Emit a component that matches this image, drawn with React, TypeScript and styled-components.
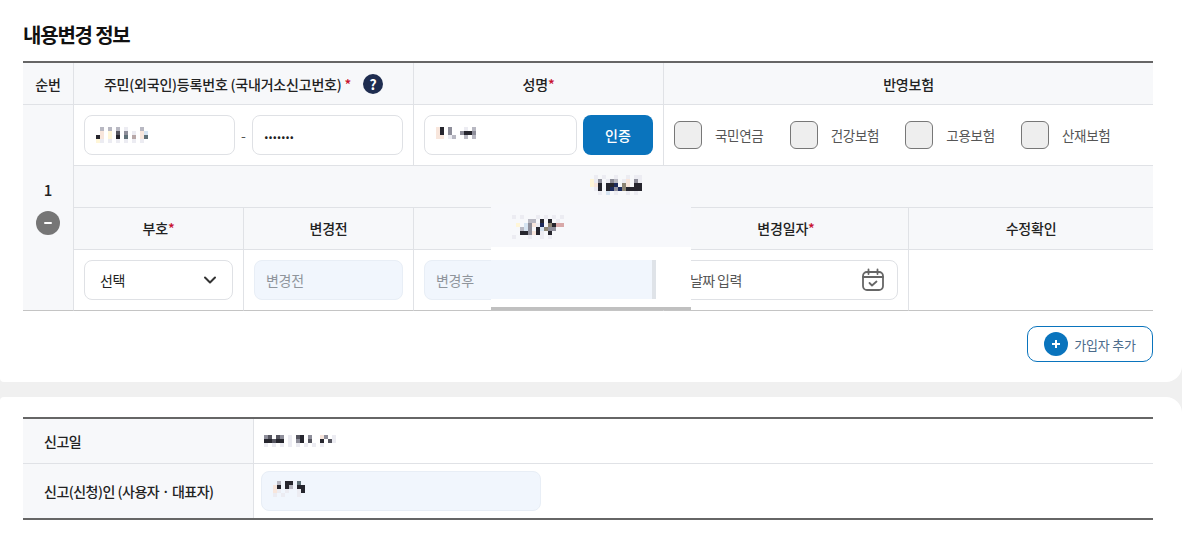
import React from 'react'
import styled, { createGlobalStyle } from 'styled-components'
import { ChevronDown } from 'lucide-react'

const palette: Record<string, string> = {
  k: '#26262e',
  d: '#55555f',
  n: '#1c2a5c',
  g: '#8e8e9a',
  s: '#b8b8c2',
  l: '#ececf2',
  y: '#fff6d8',
  p: '#f8e6dc',
  b: '#d6e4f2',
  t: '#8c8474',
  r: '#d8a8a8',
  m: '#b8a8a8',
  v: '#5f7078',
}

const Mosaic = ({ rows, className }: { rows: string[]; className?: string }) => (
  <svg
    className={className}
    width={rows[0].length * 4}
    height={rows.length * 4}
    shapeRendering='crispEdges'
  >
    {rows.map((row, y) =>
      row.split('').map((c, x) =>
        palette[c] ? <rect key={`${x}-${y}`} x={x * 4} y={y * 4} width='4' height='4' fill={palette[c]} /> : null
      )
    )}
  </svg>
)

const insurances = ['국민연금', '건강보험', '고용보험', '산재보험']

const App = () => {
  return (
    <>
      <GlobalStyle />
      <Page>
        <TopPanel>
          <Title>내용변경 정보</Title>
          <TableWrap>
            <MainTable>
              <colgroup>
                <col width='51' />
                <col width='170' />
                <col width='170' />
                <col width='250' />
                <col width='245' />
                <col width='244' />
              </colgroup>
              <tbody>
                <tr>
                  <HeadCell>순번</HeadCell>
                  <HeadCell colSpan={2}>
                    <HeadInner>
                      <span>
                        주민(외국인)등록번호 (국내거소신고번호) <Req>*</Req>
                      </span>
                      <HelpBadge>?</HelpBadge>
                    </HeadInner>
                  </HeadCell>
                  <HeadCell>
                    성명<Req>*</Req>
                  </HeadCell>
                  <HeadCell colSpan={2} $last>
                    반영보험
                  </HeadCell>
                </tr>
                <tr>
                  <NumCell rowSpan={4}>
                    <NumInner>
                      <NumText>1</NumText>
                      <MinusButton />
                    </NumInner>
                  </NumCell>
                  <BodyCell colSpan={2}>
                    <RrnRow>
                      <Field>
                        <Mosaic
                          rows={['.s.s.s.l...s..', '.p.y.d.g.l.pb.', 'kp.y.k.v.m.pv.', 'yl.l.l.l.l.l..']}
                        />
                      </Field>
                      <Dash>-</Dash>
                      <Field>
                        <Dots>.......</Dots>
                      </Field>
                    </RrnRow>
                  </BodyCell>
                  <BodyCell>
                    <NameRow>
                      <Field $grow>
                        <RaisedMosaic rows={['pk.g...l.s', 'pk.g..gkkg', 'pp.ls..s.s']} />
                      </Field>
                      <AuthButton type='button'>인증</AuthButton>
                    </NameRow>
                  </BodyCell>
                  <BodyCell colSpan={2} $last>
                    <CheckRow>
                      {insurances.map(name => (
                        <CheckItem key={name}>
                          <CheckBox />
                          <CheckLabel>{name}</CheckLabel>
                        </CheckItem>
                      ))}
                    </CheckRow>
                  </BodyCell>
                </tr>
                <tr>
                  <HeadCell colSpan={5} $last>
                    <CenterMosaic
                      rows={['..l.l..l..l.ll', '.ylg.lgs.lp.gl', '.ypk.kkn.tp.kk', '..lk.kngntkkkk', '...l.b.l..l.l.']}
                    />
                  </HeadCell>
                </tr>
                <tr>
                  <HeadCell $raised>
                    부호<Req>*</Req>
                  </HeadCell>
                  <HeadCell $raised>변경전</HeadCell>
                  <HeadCell />
                  <HeadCell $raised>
                    변경일자<Req>*</Req>
                  </HeadCell>
                  <HeadCell $last $raised>
                    수정확인
                  </HeadCell>
                </tr>
                <tr>
                  <BottomCell>
                    <SelectField>
                      선택
                      <ChevronDown size={20} strokeWidth={2.4} color='#333' />
                    </SelectField>
                  </BottomCell>
                  <BottomCell>
                    <Field $readOnly>변경전</Field>
                  </BottomCell>
                  <BottomCell>
                    <Field $readOnly>변경후</Field>
                  </BottomCell>
                  <BottomCell>
                    <DateField>
                      날짜 입력
                      <CalendarIcon />
                    </DateField>
                  </BottomCell>
                  <BottomCell $last />
                </tr>
              </tbody>
            </MainTable>
            <Patch>
              <PatchHead>
                <Mosaic
                  rows={[
                    'l.l...l.l.l.l.',
                    '....ss.k.k.l..',
                    '.y.bgpln.tkrr.',
                    '..sbg.kbtgg...',
                    '..kkgpkl.k....',
                    'l...l..l.l....',
                  ]}
                />
              </PatchHead>
              <PatchGap />
              <PatchInput />
              <PatchFoot />
            </Patch>
          </TableWrap>
          <AddRow>
            <AddButton type='button'>
              <PlusCircle />
              가입자 추가
            </AddButton>
          </AddRow>
        </TopPanel>
        <BottomPanel>
          <InfoTable>
            <tbody>
              <tr>
                <InfoHead>신고일</InfoHead>
                <InfoCell>
                  <DateMosaic rows={['gd.dg.l.dk.g..pg.l', 'kkdkk.l.gk.d..k.dl', 'l.l.l.l.l.l.l.l...']} />
                </InfoCell>
              </tr>
              <tr>
                <InfoHead $end>신고(신청)인 (사용자 · 대표자)</InfoHead>
                <InfoCell $end>
                  <ApplicantField>
                    <RaisedMosaic rows={['.s.kk.v.', 'pk.ks.kk', 'pl.l..lk', 'l.l...l.']} />
                  </ApplicantField>
                </InfoCell>
              </tr>
            </tbody>
          </InfoTable>
        </BottomPanel>
      </Page>
    </>
  )
}
export default App

const CalendarIcon = () => (
  <svg width='24' height='24' viewBox='0 0 24 24' fill='none' stroke='#666' strokeWidth='1.8' strokeLinecap='round' strokeLinejoin='round'>
    <rect x='2' y='4' width='20' height='18' rx='4' />
    <path d='M7.5 1.5v4.5M16.5 1.5v4.5M2 9h20' />
    <path d='M8.5 15l2.5 2.5 4.5-4' />
  </svg>
)

const GlobalStyle = createGlobalStyle`
  html, body {
    margin: 0;
    padding: 0;
    background: #f0f0f0;
    overflow: hidden;
  }
  body {
    font-family: "Noto Sans CJK KR", "Noto Sans", sans-serif;
    color: #222;
  }
`

const Page = styled.div`
  width: 1182px;
  height: 535px;
  display: flex;
  flex-direction: column;
  gap: 15px;
`

const TopPanel = styled.section`
  height: 382px;
  box-sizing: border-box;
  padding: 21px 29px 0 23px;
  background: #fff;
  border-radius: 0 0 16px 4px;
`

const Title = styled.h2`
  margin: 0 0 12px;
  font-size: 20px;
  line-height: 28px;
  font-weight: 700;
  letter-spacing: -1.2px;
  color: #111;
`

const TableWrap = styled.div`
  position: relative;
`

const MainTable = styled.table`
  width: 1130px;
  table-layout: fixed;
  border-collapse: separate;
  border-spacing: 0;
  border-top: 2px solid #666;
`

const HeadCell = styled.th<{ $last?: boolean; $raised?: boolean }>`
  height: 42px;
  box-sizing: border-box;
  padding: 0 0 ${p => (p.$raised ? '2px' : '0')};
  background: #f7f8fa;
  border-bottom: 1px solid #e0e2e6;
  border-right: ${p => (p.$last ? 'none' : '1px solid #e0e2e6')};
  font-size: 14px;
  font-weight: 500;
  letter-spacing: -0.2px;
  text-align: center;
  color: #222;
`

const HeadInner = styled.div`
  display: flex;
  align-items: center;
  justify-content: center;
  gap: 12px;
`

const Req = styled.span`
  color: #c8102e;
`

const HelpBadge = styled.span`
  width: 20px;
  height: 20px;
  border-radius: 50%;
  background: #1f2d50;
  color: #fff;
  font-size: 14px;
  font-weight: 700;
  line-height: 20px;
  text-align: center;
  letter-spacing: 0;
`

const NumCell = styled.td`
  padding: 0;
  background: #f7f8fa;
  border-bottom: 1px solid #c4c4c4;
  border-right: 1px solid #e0e2e6;
`

const NumInner = styled.div`
  display: flex;
  flex-direction: column;
  align-items: center;
  gap: 9px;
  padding-bottom: 3px;
`

const NumText = styled.span`
  font-size: 15px;
  font-weight: 500;
  line-height: 24px;
`

const MinusButton = styled.span`
  position: relative;
  width: 24px;
  height: 24px;
  border-radius: 50%;
  background: #767676;
  &::after {
    content: '';
    position: absolute;
    left: 8px;
    top: 11px;
    width: 8px;
    height: 2px;
    border-radius: 1px;
    background: #fff;
  }
`

const BodyCell = styled.td<{ $last?: boolean }>`
  height: 60px;
  box-sizing: content-box;
  padding: 0 10px;
  border-bottom: 1px solid #e0e2e6;
  border-right: ${p => (p.$last ? 'none' : '1px solid #e0e2e6')};
`

const BottomCell = styled(BodyCell)`
  border-bottom: 1px solid #c4c4c4;
`

const RrnRow = styled.div`
  display: flex;
  align-items: center;
  justify-content: space-between;
`

const NameRow = styled.div`
  display: flex;
  align-items: center;
  gap: 6px;
`

const Field = styled.div<{ $grow?: boolean; $readOnly?: boolean }>`
  box-sizing: border-box;
  flex: ${p => (p.$grow ? '1' : '0 0 151px')};
  height: 40px;
  display: flex;
  align-items: center;
  padding: 0 11px;
  border: 1px solid ${p => (p.$readOnly ? '#e8eef6' : '#dfe1e5')};
  border-radius: 8px;
  background: ${p => (p.$readOnly ? '#f1f6fd' : '#fff')};
  font-size: 14px;
  letter-spacing: -0.3px;
  color: ${p => (p.$readOnly ? '#8f959c' : '#222')};
`

const RaisedMosaic = styled(Mosaic)`
  margin-top: -4px;
`

const CenterMosaic = styled(Mosaic)`
  display: block;
  margin: -3px 0 0 512px;
`

const DateMosaic = styled(Mosaic)`
  display: block;
  margin-left: 3px;
`

const Dash = styled.span`
  font-size: 14px;
  color: #555;
`

const Dots = styled.span`
  font-weight: 700;
  font-size: 14px;
  margin-top: -4px;
`

const AuthButton = styled.button`
  flex: 0 0 70px;
  height: 40px;
  border: none;
  border-radius: 8px;
  padding: 0;
  background: #0a74bd;
  color: #fff;
  font-family: inherit;
  font-size: 14px;
  font-weight: 500;
`

const CheckRow = styled.div`
  display: grid;
  grid-template-columns: repeat(4, 115.67px);
  align-items: center;
`

const CheckItem = styled.label`
  display: flex;
  align-items: center;
  gap: 13px;
`

const CheckBox = styled.span`
  box-sizing: border-box;
  width: 28px;
  height: 28px;
  border: 1.5px solid #777;
  border-radius: 6px;
  background: #eee;
`

const CheckLabel = styled.span`
  font-size: 13.5px;
  letter-spacing: -0.3px;
  color: #555;
  white-space: nowrap;
`

const SelectField = styled(Field)`
  justify-content: space-between;
  padding: 0 12px 0 15px;
  color: #222;
`

const DateField = styled(Field)`
  justify-content: space-between;
  padding: 0 12px 0 15px;
  letter-spacing: -0.6px;
  color: #555;
`

const Patch = styled.div`
  position: absolute;
  left: 468px;
  top: 143px;
  width: 200px;
  display: flex;
  flex-direction: column;
  background: #fff;
`

const PatchHead = styled.div`
  height: 43px;
  box-sizing: border-box;
  padding: 11px 0 0 21px;
  background: #f7f8fb;
`

const PatchGap = styled.div`
  height: 13px;
`

const PatchInput = styled.div`
  position: relative;
  height: 39px;
  width: 161px;
  background: #f1f6fd;
  &::after {
    content: '';
    position: absolute;
    left: 161px;
    top: 0;
    width: 4px;
    height: 39px;
    background: #dfe3e8;
  }
`

const PatchFoot = styled.div`
  margin-top: 8px;
  height: 3px;
  background: #c0c0c0;
`

const AddRow = styled.div`
  display: flex;
  justify-content: flex-end;
  margin-top: 15px;
`

const AddButton = styled.button`
  box-sizing: border-box;
  width: 126px;
  height: 36px;
  display: flex;
  align-items: center;
  justify-content: center;
  gap: 6px;
  padding: 0;
  border: 1px solid #0a74bd;
  border-radius: 10px;
  background: #fff;
  font-family: inherit;
  font-size: 13px;
  letter-spacing: -0.2px;
  color: #4a6a8a;
`

const PlusCircle = styled.span`
  position: relative;
  width: 24px;
  height: 24px;
  border-radius: 50%;
  background: #0a74bd;
  &::before,
  &::after {
    content: '';
    position: absolute;
    left: 8px;
    top: 11px;
    width: 8px;
    height: 2px;
    background: #fff;
  }
  &::after {
    transform: rotate(90deg);
  }
`

const BottomPanel = styled.section`
  flex: 1;
  box-sizing: border-box;
  padding: 20px 29px 0 23px;
  background: #fff;
  border-radius: 4px 16px 0 0;
`

const InfoTable = styled.table`
  width: 1130px;
  table-layout: fixed;
  border-collapse: separate;
  border-spacing: 0;
  border-top: 2px solid #666;
  border-bottom: 2px solid #666;
`

const InfoHead = styled.th<{ $end?: boolean }>`
  width: 209px;
  height: ${p => (p.$end ? '54px' : '44px')};
  padding: 0 0 0 21px;
  background: #f7f8fa;
  border-bottom: ${p => (p.$end ? 'none' : '1px solid #e0e2e6')};
  border-right: 1px solid #e0e2e6;
  font-size: 14px;
  font-weight: 500;
  letter-spacing: -0.5px;
  text-align: left;
  color: #222;
`

const InfoCell = styled.td<{ $end?: boolean }>`
  padding: 0 7px;
  border-bottom: ${p => (p.$end ? 'none' : '1px solid #e0e2e6')};
`

const ApplicantField = styled(Field)`
  width: 280px;
  border-color: #e8eef6;
  background: #f1f6fd;
`
